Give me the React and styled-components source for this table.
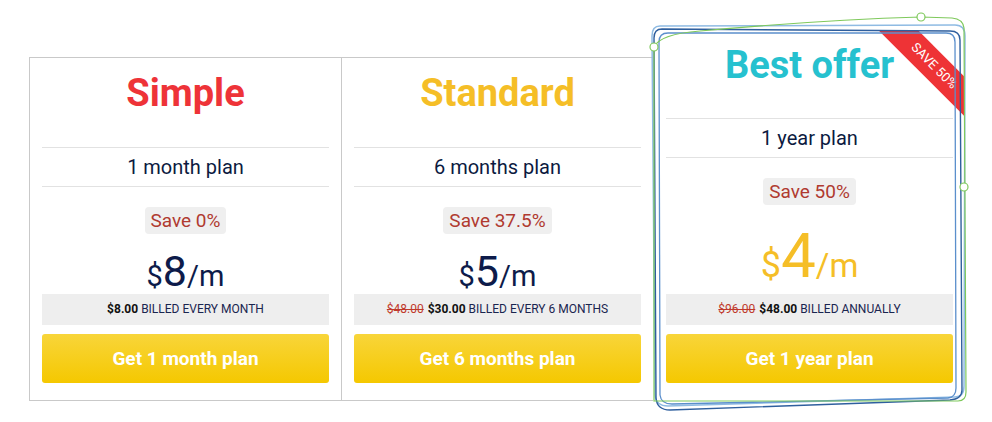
import React from 'react';
import styled, { createGlobalStyle } from 'styled-components';

const GlobalStyle = createGlobalStyle`
    html, body {
        margin: 0;
        padding: 0;
        background: #ffffff;
    }
    body {
        font-family: Roboto, "Liberation Sans", Arial, sans-serif;
    }
`

const Page = styled.div`
    position: relative;
    width: 992px;
    height: 422px;
    overflow: hidden;
    background: #fff;
`

const Row = styled.div`
    display: flex;
    align-items: flex-start;
    padding: 29px 0 0 29px;
`

const Card = styled.div`
    position: relative;
    box-sizing: border-box;
    width: 313px;
    margin-top: ${(props) => (props.featured ? '0' : '28px')};
    margin-left: ${(props) => (props.first ? '0' : '-1px')};
    padding: 0 12px 17px;
    border: 1px solid ${(props) => (props.featured ? 'transparent' : '#c9c9c9')};
    background: #fff;
    overflow: hidden;
    text-align: center;
`

const Title = styled.h2`
    margin: 0;
    padding: 11px 0 ${(props) => (props.featured ? '29px' : '30px')};
    font-size: 38px;
    line-height: 48px;
    font-weight: 700;
    color: ${(props) => props.color};
`

const PlanName = styled.div`
    padding: 7px 0;
    border-top: 1px solid #e2e2e2;
    border-bottom: 1px solid #e2e2e2;
    font-size: 20px;
    line-height: 24px;
    color: #0c1a3f;
`

const Badge = styled.span`
    display: inline-block;
    margin-top: 20px;
    padding: 0 6px;
    height: 27px;
    line-height: 27px;
    font-size: 19px;
    color: #b03a30;
    background: #efefef;
    border-radius: 4px;
`

const Price = styled.div`
    display: flex;
    justify-content: center;
    align-items: baseline;
    margin-top: ${(props) => (props.featured ? '20px' : '16px')};
    margin-bottom: ${(props) => (props.featured ? '7px' : '1px')};
    color: ${(props) => (props.featured ? '#f5be27' : '#0d1b4a')};
    line-height: 1;
`

const Currency = styled.span`
    font-size: ${(props) => (props.featured ? '36px' : '29px')};
    line-height: 1;
`

const Amount = styled.span`
    font-size: ${(props) => (props.featured ? '62px' : '43px')};
    line-height: 1;
`

const Per = styled.span`
    font-size: ${(props) => (props.featured ? '33px' : '29px')};
    line-height: 1;
`

const Billing = styled.div`
    height: 31px;
    line-height: 31px;
    font-size: 12px;
    color: #1a2550;
    background: #eeeeee;
    text-transform: uppercase;

    b {
        color: #111;
        font-weight: 700;
    }
    s {
        color: #c0392b;
        margin-right: 4px;
    }
`

const Button = styled.button`
    display: block;
    width: 100%;
    height: 49px;
    margin-top: 9px;
    border: none;
    border-radius: 3px;
    background: linear-gradient(to bottom, #f8d53a, #f5c800);
    color: #fff;
    font-family: Roboto, "Liberation Sans", Arial, sans-serif;
    font-size: 19px;
    font-weight: 700;
    cursor: pointer;
`

const Ribbon = styled.div`
    position: absolute;
    top: 22px;
    left: 210px;
    width: 140px;
    height: 28px;
    line-height: 28px;
    background: #ee3336;
    color: #fff;
    font-size: 13px;
    text-align: center;
    transform: rotate(45deg);
`

const Sketch = styled.svg`
    position: absolute;
    top: 0;
    left: 0;
    pointer-events: none;
`

const plans = [
    {
        title: 'Simple',
        color: '#ee3338',
        name: '1 month plan',
        save: 'Save 0%',
        amount: '8',
        old: null,
        total: '$8.00',
        billed: 'billed every month',
        cta: 'Get 1 month plan',
    },
    {
        title: 'Standard',
        color: '#f5be27',
        name: '6 months plan',
        save: 'Save 37.5%',
        amount: '5',
        old: '$48.00',
        total: '$30.00',
        billed: 'billed every 6 months',
        cta: 'Get 6 months plan',
    },
    {
        title: 'Best offer',
        color: '#26c1cf',
        name: '1 year plan',
        save: 'Save 50%',
        amount: '4',
        old: '$96.00',
        total: '$48.00',
        billed: 'billed annually',
        cta: 'Get 1 year plan',
        featured: true,
    },
]

const App = () => {
    return (
        <Page>
            <GlobalStyle />
            <Row>
                {plans.map((p, i) => (
                    <Card key={p.title} featured={p.featured} first={i === 0}>
                        {p.featured && <Ribbon>SAVE 50%</Ribbon>}
                        <Title color={p.color} featured={p.featured}>{p.title}</Title>
                        <PlanName>{p.name}</PlanName>
                        <Badge>{p.save}</Badge>
                        <Price featured={p.featured}>
                            <Currency featured={p.featured}>$</Currency>
                            <Amount featured={p.featured}>{p.amount}</Amount>
                            <Per featured={p.featured}>/m</Per>
                        </Price>
                        <Billing>
                            {p.old && <s>{p.old}</s>}
                            <b>{p.total}</b> {p.billed}
                        </Billing>
                        <Button>{p.cta}</Button>
                    </Card>
                ))}
            </Row>
            <Sketch width="992" height="422" viewBox="0 0 992 422">
                <path d="M660 26 Q652 26 652 36 L655 395 Q656 406 668 406 L955 397 Q964 397 964 386 L965 36 Q965 25 955 25 Z" fill="none" stroke="#8fbbe3" strokeWidth="1.5" />
                <path d="M662 29 Q654 29 654 38 L656 398 Q657 410 670 410 L950 400 Q962 399 962 390 L960 40 Q960 31 950 31 Z" fill="none" stroke="#2f5f9e" strokeWidth="1.4" />
                <path d="M668 33 Q659 33 659 42 L660 395 Q661 404 672 404 L948 398 Q956 397 956 388 L955 42 Q955 33 946 33 Z" fill="none" stroke="#5b8fcc" strokeWidth="1.3" />
                <path d="M654 47 L654 401 L958 401 Q966 401 966 392 L964 28 Q963 19 952 18 L921 17 Q820 20 700 31 Q660 34 654 47" fill="none" stroke="#7fc95c" strokeWidth="1.2" />
                <circle cx="654" cy="47" r="4" fill="#fff" stroke="#7fc95c" strokeWidth="1.2" />
                <circle cx="921" cy="17" r="4" fill="#fff" stroke="#7fc95c" strokeWidth="1.2" />
                <circle cx="964" cy="187" r="4" fill="#fff" stroke="#7fc95c" strokeWidth="1.2" />
            </Sketch>
        </Page>
    );
}

export default App;
